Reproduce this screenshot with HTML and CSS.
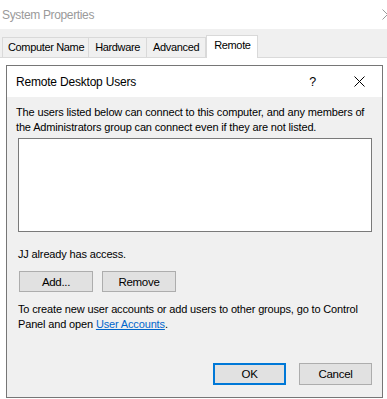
FILE: index.html
```html
<!DOCTYPE html>
<html lang="en">

<head>
    <meta charset="UTF-8">
    <title>System Properties</title>
    <link rel="stylesheet" href="styles.css">
</head>

<body>
    <div class="window">
        <div class="window-title">
            <span>System Properties</span>
            <svg class="window-close" width="11" height="11" viewBox="0 0 11 11">
                <path d="M0.5 0.5 L10.5 10.5 M10.5 0.5 L0.5 10.5" stroke="#9a9a9a" stroke-width="1" fill="none" />
            </svg>
        </div>
        <div class="tab-band">
            <div class="tab">Computer Name</div>
            <div class="tab">Hardware</div>
            <div class="tab">Advanced</div>
            <div class="tab active">Remote</div>
        </div>
        <div class="tab-page"></div>
    </div>

    <div class="dialog">
        <div class="dialog-title">
            <span class="dialog-name">Remote Desktop Users</span>
            <span class="dialog-help">?</span>
            <svg class="dialog-close" width="11" height="11" viewBox="0 0 11 11">
                <path d="M0.5 0.5 L10.5 10.5 M10.5 0.5 L0.5 10.5" stroke="#000" stroke-width="1" fill="none" />
            </svg>
        </div>
        <div class="dialog-body">
            <p class="intro">The users listed below can connect to this computer, and any members of the Administrators group can connect even if they are not listed.</p>
            <div class="user-list"></div>
            <p class="access">JJ already has access.</p>
            <div class="row">
                <button class="btn">Add...</button>
                <button class="btn">Remove</button>
            </div>
            <p class="note">To create new user accounts or add users to other groups, go to Control Panel and open <a href="#">User Accounts</a>.</p>
            <div class="footer">
                <button class="btn default">OK</button>
                <button class="btn">Cancel</button>
            </div>
        </div>
    </div>
</body>
</html>
```

FILE: styles.css
```css
body {
    font-family: 'Liberation Sans', Arial, sans-serif;
    font-size: 11px;
    letter-spacing: -0.15px;
    background-color: #ffffff;
    margin: 0;
    padding: 0;
    width: 387px;
    height: 399px;
    overflow: hidden;
    position: relative;
    color: #000000;
}

.window-title {
    height: 29px;
    display: flex;
    align-items: center;
    justify-content: space-between;
    padding-left: 2px;
    font-size: 12px;
    letter-spacing: -0.35px;
    color: #9a9a9a;
    box-sizing: border-box;
}

.window-close {
    margin-right: -6px;
}

.tab-band {
    background-color: #f0f0f0;
    height: 29px;
    display: flex;
    align-items: flex-end;
    padding-left: 2px;
    box-sizing: border-box;
    border-bottom: 1px solid #dadada;
    letter-spacing: -0.35px;
}

.tab {
    height: 19px;
    line-height: 19px;
    padding: 0 6px;
    border: 1px solid #d9d9d9;
    border-bottom: none;
    border-left: none;
    background-color: #f0f0f0;
    white-space: nowrap;
}

.tab:first-child {
    border-left: 1px solid #d9d9d9;
    padding-left: 5px;
    padding-right: 4px;
}

.tab.active {
    height: 22px;
    line-height: 18px;
    background-color: #ffffff;
    border: 1px solid #d9d9d9;
    border-bottom: none;
    margin-bottom: -1px;
    padding: 0 6px 0 7px;
}

.tab-page {
    height: 340px;
    background-color: #ffffff;
}

/* modal dialog on top of the window */
.dialog {
    position: absolute;
    left: 6px;
    top: 65px;
    width: 377px;
    height: 333px;
    box-sizing: border-box;
    border: 1px solid #767676;
    background-color: #f0f0f0;
    display: flex;
    flex-direction: column;
}

.dialog-title {
    height: 31px;
    background-color: #ffffff;
    display: flex;
    align-items: center;
    padding-left: 9px;
    flex-shrink: 0;
    font-size: 12px;
    letter-spacing: -0.2px;
}

.dialog-name {
    flex: 1;
}

.dialog-help {
    font-size: 12.5px;
    margin-right: 38px;
}

.dialog-close {
    margin-right: 17px;
}

.dialog-body {
    flex: 1;
    display: flex;
    flex-direction: column;
    padding: 8px 9px 12px 9px;
}

.intro,
.note,
.access {
    margin: 0;
    line-height: 15px;
}

.user-list {
    margin: 3px 0 0 2px;
    width: 352px;
    height: 92px;
    background-color: #ffffff;
    border: 1px solid #7a7a7a;
}

.access {
    margin-top: 15px;
    padding-left: 2px;
}

.row {
    display: flex;
    gap: 9px;
    margin-top: 9px;
    padding-left: 3px;
}

.btn {
    width: 74px;
    height: 21px;
    padding: 0;
    font-family: inherit;
    font-size: 11.5px;
    letter-spacing: -0.3px;
    background-color: #e1e1e1;
    border: 1px solid #adadad;
    color: #000000;
}

.note {
    margin-top: 10px;
    padding-left: 2px;
}

.note a {
    color: #0066cc;
}

.footer {
    margin-top: auto;
    display: flex;
    justify-content: flex-end;
    gap: 13px;
    padding-right: 1px;
}

.footer .btn {
    width: 73px;
    height: 22px;
}

.btn.default {
    border: 2px solid #0078d7;
}
```
